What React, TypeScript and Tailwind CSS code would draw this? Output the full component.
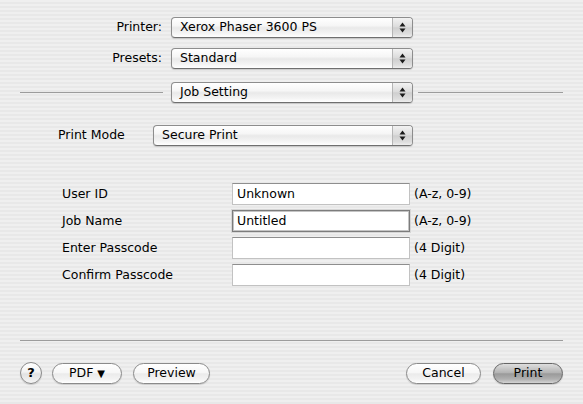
import React from 'react'

const font = { fontFamily: '"DejaVu Sans", "Liberation Sans", sans-serif' }

function Arrows() {
  return (
    <svg width="7" height="11" viewBox="0 0 7 11">
      <path d="M3.5 0.5 L6.5 4.5 L0.5 4.5 Z" fill="#1a1a1a" />
      <path d="M0.5 6.5 L6.5 6.5 L3.5 10.5 Z" fill="#1a1a1a" />
    </svg>
  )
}

function Popup({ value, width }: { value: string; width: string }) {
  return (
    <div
      className={`${width} h-[21px] flex items-stretch rounded-[4px] border border-[#8d8d8d] border-b-[#6f6f6f] bg-[linear-gradient(180deg,#ffffff_0%,#f6f6f6_40%,#e9e9e9_52%,#f4f4f4_80%,#ffffff_100%)] shadow-[0_1px_1px_rgba(0,0,0,0.15)] overflow-hidden`}
    >
      <div className="flex-1 flex items-center pl-[8px] text-[12.5px] text-black">{value}</div>
      <div className="w-[20px] flex items-center justify-center border-l border-[#b5b5b5] bg-[linear-gradient(180deg,#f2f2f2_0%,#dcdcdc_45%,#cfcfcf_52%,#dedede_85%,#eeeeee_100%)]">
        <Arrows />
      </div>
    </div>
  )
}

function Field({ value, focused }: { value?: string; focused?: boolean }) {
  return (
    <div
      className={`w-[178px] h-[22px] flex items-center pl-[4px] bg-white text-[12.5px] text-black border ${
        focused
          ? 'border-[#7c7c7c] shadow-[inset_0_0_0_1px_#c4c4c4,0_0_0_1px_#d6d6d6]'
          : 'border-[#c2c2c2] border-t-[#8e8e8e]'
      }`}
    >
      {value}
    </div>
  )
}

function PillButton({ label, width, primary }: { label: React.ReactNode; width: string; primary?: boolean }) {
  return (
    <div
      className={`${width} h-[21px] flex items-center justify-center rounded-full text-[12.5px] text-black border ${
        primary
          ? 'border-[#666666] bg-[linear-gradient(180deg,#dedede_0%,#b4b4b4_45%,#9a9a9a_52%,#b0b0b0_80%,#d4d4d4_100%)]'
          : 'border-[#8a8a8a] bg-[linear-gradient(180deg,#ffffff_0%,#f7f7f7_45%,#ebebeb_52%,#f3f3f3_80%,#ffffff_100%)]'
      } shadow-[0_1px_1px_rgba(0,0,0,0.15)]`}
    >
      {label}
    </div>
  )
}

export default function App() {
  return (
    <div
      style={font}
      className="w-[583px] h-[404px] overflow-hidden flex flex-col bg-[repeating-linear-gradient(180deg,#efefef_0px,#efefef_2px,#e8e8e8_2px,#e8e8e8_4px)] text-black"
    >
      {/* Printer / Presets */}
      <div className="mt-[17px] flex items-center">
        <div className="w-[163px] text-right text-[12.5px] pr-[1px]">Printer:</div>
        <div className="ml-[8px]">
          <Popup value="Xerox Phaser 3600 PS" width="w-[242px]" />
        </div>
      </div>
      <div className="mt-[10px] flex items-center">
        <div className="w-[163px] text-right text-[12.5px] pr-[1px]">Presets:</div>
        <div className="ml-[8px]">
          <Popup value="Standard" width="w-[242px]" />
        </div>
      </div>

      {/* Panel selector */}
      <div className="mt-[13px] flex items-center px-[20px]">
        <div className="w-[143px] h-px bg-[#9c9c9c]" />
        <div className="ml-[8px]">
          <Popup value="Job Setting" width="w-[242px]" />
        </div>
        <div className="ml-[5px] flex-1 h-px bg-[#9c9c9c]" />
      </div>

      {/* Print Mode */}
      <div className="mt-[22px] flex items-center">
        <div className="ml-[58px] w-[95px] text-[12.5px]">Print Mode</div>
        <Popup value="Secure Print" width="w-[260px]" />
      </div>

      {/* Secure print fields */}
      <div className="mt-[37px] flex flex-col gap-[5px]">
        {[
          { label: 'User ID', value: 'Unknown', hint: '(A-z, 0-9)' },
          { label: 'Job Name', value: 'Untitled', hint: '(A-z, 0-9)', focused: true },
          { label: 'Enter Passcode', value: '', hint: '(4 Digit)' },
          { label: 'Confirm Passcode', value: '', hint: '(4 Digit)' },
        ].map((row) => (
          <div key={row.label} className="flex items-center">
            <div className="ml-[62px] w-[170px] text-[12.5px]">{row.label}</div>
            <Field value={row.value} focused={row.focused} />
            <div className="ml-[4px] text-[12.5px]">{row.hint}</div>
          </div>
        ))}
      </div>

      {/* Bottom separator */}
      <div className="mt-[54px] mx-[20px] h-px bg-[#9c9c9c]" />

      {/* Buttons */}
      <div className="mt-[21px] flex items-center px-[20px]">
        <div className="w-[22px] h-[22px] rounded-full border border-[#8a8a8a] flex items-center justify-center text-[13px] font-semibold bg-[linear-gradient(180deg,#ffffff_0%,#f2f2f2_45%,#e2e2e2_55%,#f5f5f5_100%)] shadow-[0_1px_1px_rgba(0,0,0,0.15)]">
          ?
        </div>
        <div className="ml-[10px]">
          <PillButton label={<span>PDF <span className="text-[10px]">▼</span></span>} width="w-[70px]" />
        </div>
        <div className="ml-[11px]">
          <PillButton label="Preview" width="w-[77px]" />
        </div>
        <div className="flex-1" />
        <PillButton label="Cancel" width="w-[75px]" />
        <div className="ml-[12px]">
          <PillButton label="Print" width="w-[70px]" primary />
        </div>
      </div>
    </div>
  )
}
